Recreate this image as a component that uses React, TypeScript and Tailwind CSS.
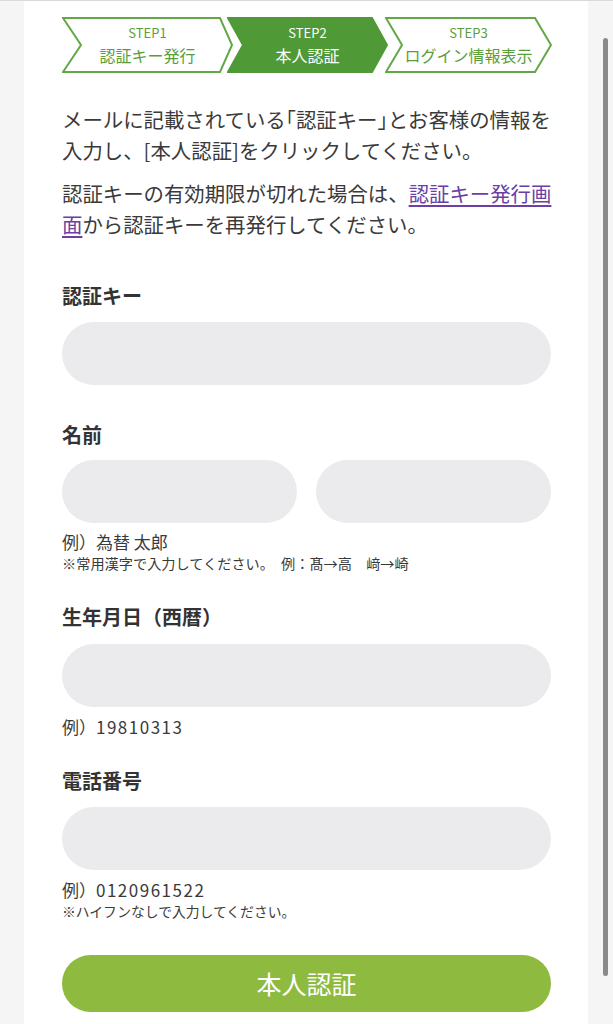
import React from "react";

const font = { fontFamily: '"Noto Sans CJK JP", "Noto Sans", sans-serif' };

function Step({
  w,
  points,
  filled,
  top,
  bottom,
  className,
}: {
  w: number;
  points: string;
  filled?: boolean;
  top: string;
  bottom: string;
  className?: string;
}) {
  return (
    <div className={`relative h-[56px] shrink-0 ${className ?? ""}`} style={{ width: w }}>
      <svg
        className="absolute inset-0"
        width={w}
        height={56}
        viewBox={`0 0 ${w} 56`}
      >
        <polygon
          points={points}
          fill={filled ? "#4f9a36" : "#ffffff"}
          stroke={filled ? "#4f9a36" : "#62a847"}
          strokeWidth={2}
          strokeLinejoin="miter"
        />
      </svg>
      <div
        className={`relative flex flex-col items-center pt-[6px] ${
          filled ? "text-white" : "text-[#5a9e3a]"
        }`}
      >
        <div className="text-[13px] leading-[20px]">{top}</div>
        <div className="text-[16px] leading-[22px] mt-[1px]">{bottom}</div>
      </div>
    </div>
  );
}

function Label({ children, className }: { children: React.ReactNode; className?: string }) {
  return (
    <div className={`text-[20px] leading-[28px] font-bold text-[#333] ${className ?? ""}`}>
      {children}
    </div>
  );
}

function Input({ className }: { className?: string }) {
  return <div className={`h-[63px] rounded-full bg-[#ebebed] ${className ?? ""}`} />;
}

export default function App() {
  return (
    <div
      className="relative min-h-screen bg-[#f5f5f5] border-t border-[#d9d9d9] overflow-hidden"
      style={font}
    >
      <div className="ml-[24px] w-[564px] bg-white pl-[38px] pr-[37px] pt-[16px] pb-[40px] min-h-[1023px]">
        {/* steps */}
        <div className="flex">
          <Step
            w={171}
            points="1,1 158,1 170,28 158,55 1,55 19,28"
            top="STEP1"
            bottom="認証キー発行"
          />
          <Step
            w={161}
            className="-ml-[6px]"
            points="1,1 145,1 160,28 145,55 1,55 16,28"
            filled
            top="STEP2"
            bottom="本人認証"
          />
          <Step
            w={167}
            className="-ml-[3px]"
            points="1,1 150,1 166,28 150,55 1,55 17,28"
            top="STEP3"
            bottom="ログイン情報表示"
          />
        </div>

        {/* description */}
        <div className="mt-[31px] text-[20.4px] leading-[31px] text-[#3a3a3a] whitespace-nowrap">
          <p>
            メールに記載されている
            <span className="[font-feature-settings:'halt']">「</span>認証キー
            <span className="[font-feature-settings:'halt']">」</span>とお客様の情報を
            <br />
            入力し、[本人認証]をクリックしてください。
          </p>
          <p className="mt-[12px]">
            認証キーの有効期限が切れた場合は、
            <a href="#" className="text-[#6b3fa5] underline underline-offset-[3px]">
              認証キー発行画
              <br />面
            </a>
            から認証キーを再発行してください。
          </p>
        </div>

        {/* 認証キー */}
        <Label className="mt-[42px]">認証キー</Label>
        <Input className="mt-[12px]" />

        {/* 名前 */}
        <Label className="mt-[36px]">名前</Label>
        <div className="mt-[11px] flex gap-[19px]">
          <Input className="flex-1" />
          <Input className="flex-1" />
        </div>
        <div className="mt-[8px] text-[17px] leading-[22px] text-[#3a3a3a]">例）為替 太郎</div>
        <div className="text-[14.2px] leading-[20px] text-[#3a3a3a] whitespace-pre">
          ※常用漢字で入力してください。　例：髙→高　﨑→崎
        </div>

        {/* 生年月日 */}
        <Label className="mt-[30px]">生年月日（西暦）</Label>
        <Input className="mt-[13px]" />
        <div className="mt-[9px] text-[17px] leading-[22px] text-[#3a3a3a]">
          例）<span className="tracking-[1.5px]">19810313</span>
        </div>

        {/* 電話番号 */}
        <Label className="mt-[29px]">電話番号</Label>
        <Input className="mt-[12px]" />
        <div className="mt-[9px] text-[17px] leading-[22px] text-[#3a3a3a]">
          例）<span className="tracking-[1.5px]">0120961522</span>
        </div>
        <div className="text-[13.8px] leading-[20px] text-[#3a3a3a]">
          ※ハイフンなしで入力してください。
        </div>

        {/* button */}
        <button
          type="button"
          className="mt-[34px] w-full h-[57px] rounded-full bg-[#8fba40] text-white text-[25px] leading-none flex items-center justify-center"
        >
          本人認証
        </button>
      </div>

      {/* scrollbar overlay */}
      <div className="absolute right-[5px] top-[37px] w-[5px] h-[938px] rounded-full bg-[#8a8a8a]" />
    </div>
  );
}
